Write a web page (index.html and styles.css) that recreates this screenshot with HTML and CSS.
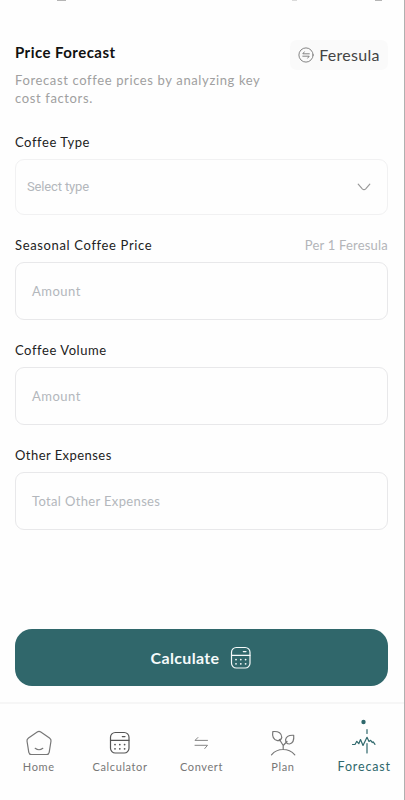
FILE: index.html
```html
<!DOCTYPE html>
<html lang="en">
<head>
<meta charset="utf-8">
<title>Price Forecast</title>
<link rel="stylesheet" href="styles.css">
</head>
<body>
<svg class="defs" width="0" height="0" aria-hidden="true">
  <symbol id="calc" viewBox="0 0 22 24">
    <rect x="1.5" y="1.5" width="18.5" height="20.5" rx="4.8"/>
    <path d="M1.5 9.3H20M13.3 5.6H16"/>
    <path class="dots" d="M6 13.6h.01M10.8 13.6h.01M15.6 13.6h.01M6 17.8h.01M10.8 17.8h.01M15.6 17.8h.01"/>
  </symbol>
</svg>
<div class="screen">
  <div class="status"><i class="s1"></i><i class="s2"></i><i class="s3"></i></div>
  <header class="head">
    <div>
      <h1><span>Price Forecast</span></h1>
      <p class="sub"><span>Forecast coffee prices by analyzing key</span><br><span>cost factors.</span></p>
    </div>
    <button class="unit">
      <svg width="16" height="16" viewBox="0 0 16 16"><circle cx="8" cy="8" r="7.1"/><path d="M11.3 6.8H4.8L6.3 4.9M4.8 9.2h6.4l-1.5 1.9"/></svg>
      <span>Feresula</span>
    </button>
  </header>
  <main class="form">
    <div class="label"><span>Coffee Type</span></div>
    <div class="box select"><span>Select type</span>
      <svg width="14" height="9" viewBox="0 0 14 9"><path d="M1.2 1.2 5.3 5.8Q7 7.5 8.7 5.8L12.8 1.2"/></svg>
    </div>
    <div class="label"><span class="wide">Seasonal Coffee Price</span><span class="per">Per 1 Feresula</span></div>
    <div class="box"><span>Amount</span></div>
    <div class="label"><span>Coffee Volume</span></div>
    <div class="box"><span>Amount</span></div>
    <div class="label"><span class="tight">Other Expenses</span></div>
    <div class="box"><span class="total">Total Other Expenses</span></div>
  </main>
  <button class="cta"><span>Calculate</span><svg width="22" height="24"><use href="#calc"/></svg></button>
  <nav class="nav">
    <div class="item"><svg width="28" height="28" viewBox="0 0 28 28"><path d="M12.2 3Q14 1.8 15.8 3L24.5 8.9Q26.3 10.2 26 12L24.2 23.3Q23.7 25.5 21.5 25.5H6.5Q4.3 25.5 3.8 23.3L2 12Q1.7 10.2 3.5 8.9ZM10.2 19.3Q14 22.2 17.8 19.3"/></svg><span>Home</span></div>
    <div class="item"><svg class="dark" width="22" height="24"><use href="#calc"/></svg><span>Calculator</span></div>
    <div class="item"><svg class="thin" width="16" height="14" viewBox="0 0 16 14"><path d="M14.5 4.4H2L4.9 1.5M2 9.3H14.5L11.8 12.5"/></svg><span>Convert</span></div>
    <div class="item"><svg width="28" height="28" viewBox="0 0 28 28"><path d="M2.5 25.8Q7 20.5 14 20.5T25.8 25.8M14.2 20.3V16.5L10.5 10.5M14.2 16.5 18 12.5M3.8 2.6Q12.8 1.8 12.8 8.5Q11.8 12 8.5 11.7Q2.5 10.2 3.8 2.6ZM24.7 6.3Q17.5 5.8 16.6 10.7Q16.5 14.8 20.5 15Q25.5 14 24.7 6.3Z"/></svg><span>Plan</span></div>
    <div class="item active"><svg width="26" height="36" viewBox="0 0 26 36"><circle cx="12.5" cy="3" r="2.2"/><path d="M16 10.5v4M16 24.5v9.5"/><path d="M1.5 25.5H4L5.8 22.3 7.8 24.7 9.5 20.5 12 26.5 16 18.3 18 22.5 19.7 21.3 21.2 23.5 22.2 22.8 24 25.3"/></svg><span>Forecast</span></div>
  </nav>
</div>
</body>
</html>
```
FILE: styles.css
```css
* { box-sizing: border-box; }
body { margin: 0; background: #fefefe; font-family: Lato, "Liberation Sans", sans-serif; }
button { border: 0; padding: 0; font: inherit; }
.defs { position: absolute; }
svg { flex: none; fill: none; stroke: currentColor; stroke-width: 1.2; stroke-linecap: round; stroke-linejoin: round; }
.dots { stroke-width: 1.8; }
span { white-space: nowrap; }
.screen { width: 405px; height: 800px; overflow: hidden; display: flex; flex-direction: column; border-right: 1px solid #b0b0b0; }
.status { height: 40px; flex: none; display: flex; padding-left: 57px; }
.status i { height: 1px; background: #b5b5b5; }
.s1 { width: 9px; }
.s2 { width: 5px; margin-left: 226px; opacity: .5; }
.s3 { width: 7px; margin-left: 78px; }
.head { display: flex; justify-content: space-between; align-items: flex-start; height: 90px; padding: 0 16px 0 15px; flex: none; }
h1 { margin: 2px 0 9px; font-size: 15px; line-height: 20px; font-weight: 700; color: #111; letter-spacing: .45px; }
.sub { margin: 0; font-size: 13px; line-height: 18px; color: #a0a0a0; letter-spacing: .63px; }
.unit { width: 98px; height: 30px; border-radius: 7px; background: #fafafa; color: #444; display: flex; align-items: center; justify-content: center; gap: 5px; font-size: 16px; line-height: 20px; letter-spacing: .3px; }
.unit svg { stroke-width: .8; color: #666; }
.form { padding: 0 16px 0 15px; height: 499px; flex: none; }
.label { display: flex; justify-content: space-between; height: 29px; padding-top: 2px; font-size: 13px; line-height: 20px; color: #222; letter-spacing: .57px; }
.wide { letter-spacing: .65px; }
.tight { letter-spacing: .45px; }
.per { color: #b3b5b9; letter-spacing: .2px; }
.box { height: 58px; margin-bottom: 18px; border: 1px solid #e8e8ea; border-radius: 9px; display: flex; align-items: center; padding: 0 16px 1px; font-size: 13px; line-height: 20px; color: #b3b7bc; letter-spacing: .5px; }
.total { letter-spacing: .35px; }
.select { height: 56px; border-color: #f1f1f2; padding: 0 16px 0 11px; justify-content: space-between; font-family: Roboto, sans-serif; letter-spacing: -.15px; margin-bottom: 18px; }
.select svg { color: #999; }
.cta { width: 373px; height: 57px; margin-left: 15px; flex: none; border-radius: 17px; background: #30676b; color: #f5fafa; display: flex; align-items: center; justify-content: center; gap: 11px; font-size: 16px; line-height: 20px; font-weight: 700; letter-spacing: .35px; }
.nav { margin-top: 16px; height: 98px; flex: none; border-top: 2px solid #f6f6f6; display: grid; grid-template-columns: repeat(5, 81.4px); margin-left: -2px; }
.item { display: flex; flex-direction: column; align-items: center; color: #777; font-size: 11px; line-height: 16px; letter-spacing: .6px; padding-top: 22px; }
.item svg { margin: auto 0; }
.item span { margin-bottom: 25px; }
.item .dark { color: #555; }
.item .thin { stroke-width: .9; }
.active { color: #2f686c; font-size: 12.5px; padding-top: 10px; letter-spacing: .85px; }
.active circle { fill: currentColor; stroke: none; }
```
